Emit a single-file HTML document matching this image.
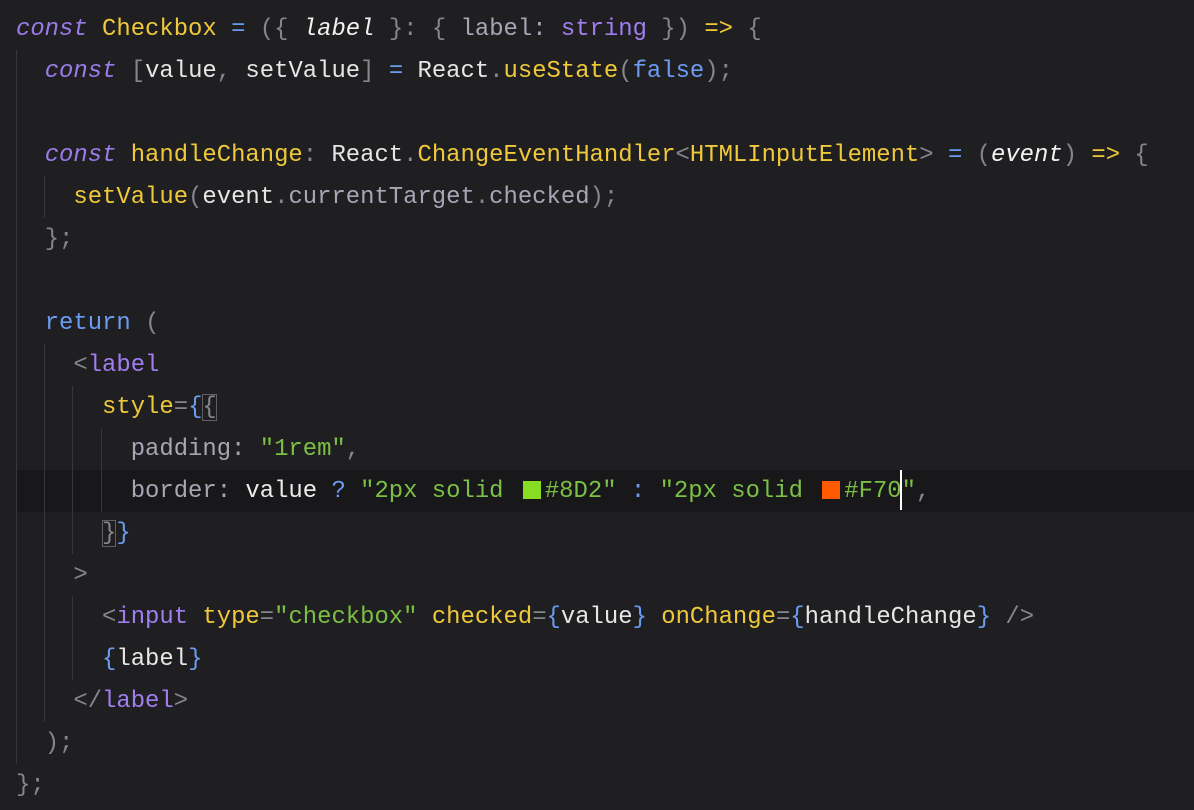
<!DOCTYPE html>
<html><head><meta charset="utf-8"><style>
html,body{margin:0;padding:0;background:#1f1f21;width:1194px;height:810px;overflow:hidden}
.c{position:absolute;left:16px;top:9px;font-family:"Liberation Mono",monospace;font-size:23.9px;color:#e6e6e6}
.l{height:42px;line-height:42px;white-space:pre}
.k{color:#9a7bea;font-style:italic}
.y{color:#efc93a}
.b{color:#6c9cf2}
.g{color:#85858f}
.p{color:#a6a6b4}
.s{color:#7cbf45}
.t{color:#a07ef0}
.i{font-style:italic;color:#f2f2f2}
.w{color:#ececec}
.hl{position:absolute;left:16px;top:470px;width:1178px;height:42px;background:#18181a}
.gd{position:absolute;width:1px;background:#38383c}
.sw{display:inline-block;width:18px;height:18px;margin:0 4px 0 5px;vertical-align:-2px}
.bx{outline:1px solid #606066;outline-offset:-1px}
.cur{position:absolute;left:900px;top:470px;width:2px;height:40px;background:#fff}
</style></head><body>
<div class="hl"></div>
<div class="gd" style="left:16px;top:50px;height:714px"></div>
<div class="gd" style="left:44px;top:176px;height:42px"></div>
<div class="gd" style="left:44px;top:344px;height:378px"></div>
<div class="gd" style="left:72px;top:386px;height:168px"></div>
<div class="gd" style="left:72px;top:596px;height:84px"></div>
<div class="gd" style="left:101px;top:428px;height:84px"></div>
<div class="c">
<div class="l"><span class="k">const</span> <span class="y">Checkbox</span> <span class="b">=</span> <span class="g">({</span> <span class="i">label</span> <span class="g">}:</span> <span class="g">{</span> <span class="p">label:</span> <span class="t">string</span> <span class="g">})</span> <span class="y">=&gt;</span> <span class="g">{</span></div>
<div class="l">  <span class="k">const</span> <span class="g">[</span>value<span class="g">,</span> setValue<span class="g">]</span> <span class="b">=</span> React<span class="g">.</span><span class="y">useState</span><span class="g">(</span><span class="b">false</span><span class="g">);</span></div>
<div class="l"> </div>
<div class="l">  <span class="k">const</span> <span class="y">handleChange</span><span class="g">:</span> React<span class="g">.</span><span class="y">ChangeEventHandler</span><span class="g">&lt;</span><span class="y">HTMLInputElement</span><span class="g">&gt;</span> <span class="b">=</span> <span class="g">(</span><span class="i">event</span><span class="g">)</span> <span class="y">=&gt;</span> <span class="g">{</span></div>
<div class="l">    <span class="y">setValue</span><span class="g">(</span>event<span class="g">.</span><span class="p">currentTarget</span><span class="g">.</span><span class="p">checked</span><span class="g">);</span></div>
<div class="l">  <span class="g">};</span></div>
<div class="l"> </div>
<div class="l">  <span class="b">return</span> <span class="g">(</span></div>
<div class="l">    <span class="g">&lt;</span><span class="t">label</span></div>
<div class="l">      <span class="y">style</span><span class="g">=</span><span class="b">{</span><span class="g bx">{</span></div>
<div class="l">        <span class="p">padding:</span> <span class="s">"1rem"</span><span class="g">,</span></div>
<div class="l">        <span class="p">border:</span> <span class="w">value</span> <span class="b">?</span> <span class="s">"2px solid <span class="sw" style="background:#88dd22"></span>#8D2"</span> <span class="b">:</span> <span class="s">"2px solid <span class="sw" style="background:#ff5a00"></span>#F70"</span><span class="g">,</span></div>
<div class="l">      <span class="g bx">}</span><span class="b">}</span></div>
<div class="l">    <span class="g">&gt;</span></div>
<div class="l">      <span class="g">&lt;</span><span class="t">input</span> <span class="y">type</span><span class="g">=</span><span class="s">"checkbox"</span> <span class="y">checked</span><span class="g">=</span><span class="b">{</span>value<span class="b">}</span> <span class="y">onChange</span><span class="g">=</span><span class="b">{</span>handleChange<span class="b">}</span> <span class="g">/&gt;</span></div>
<div class="l">      <span class="b">{</span>label<span class="b">}</span></div>
<div class="l">    <span class="g">&lt;/</span><span class="t">label</span><span class="g">&gt;</span></div>
<div class="l">  <span class="g">);</span></div>
<div class="l"><span class="g">};</span></div>
</div>
<div class="cur"></div>
</body></html>
